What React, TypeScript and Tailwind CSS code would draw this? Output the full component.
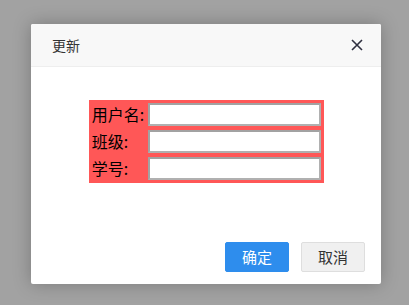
import React from 'react';

const fields = ['用户名:', '班级:', '学号:'];

export default function App() {
    return (
        <div
            className="w-[409px] h-[305px] bg-[#a2a2a2] pt-[24px] pl-[31px] overflow-hidden"
            style={{ fontFamily: '"Noto Sans CJK SC", "Noto Sans", sans-serif' }}
        >
            <div className="w-[350px] h-[260px] bg-white rounded-[2px] shadow-[0_0_18px_rgba(0,0,0,0.25)] flex flex-col">
                {/* Header */}
                <div className="h-[43px] bg-[#f8f8f8] border-b border-[#eeeeee] rounded-t-[2px] flex items-center justify-between pl-[21px] pr-[18px]">
                    <span className="text-[14px] text-[#333]">更新</span>
                    <svg width="12" height="12" viewBox="0 0 12 12" className="text-[#2f3040]">
                        <path d="M1 1 L11 11 M11 1 L1 11" stroke="currentColor" strokeWidth="1.6" />
                    </svg>
                </div>

                {/* Form */}
                <div className="flex justify-center pt-[33px] pl-px">
                    <table className="border-separate border-spacing-[2px] bg-[#ff5757]">
                        <tbody>
                            {fields.map(label => (
                                <tr key={label}>
                                    <td className="p-px w-[51px] text-[16px] leading-[23px] text-black whitespace-nowrap">{label}</td>
                                    <td className="p-px">
                                        <input
                                            type="text"
                                            className="block w-[173px] h-[23px] bg-white border-2 border-[#b0b0b0] border-t-[#a2a2a2] border-l-[#a2a2a2] outline-none"
                                        />
                                    </td>
                                </tr>
                            ))}
                        </tbody>
                    </table>
                </div>

                {/* Footer */}
                <div className="mt-auto flex justify-end gap-[12px] pr-[16px] pb-[12px]">
                    <button className="w-[64px] h-[30px] rounded-[2px] bg-[#2e8ded] border border-[#2e8ded] text-white text-[15px]">确定</button>
                    <button className="w-[64px] h-[30px] rounded-[2px] bg-[#f0f0f0] border border-[#dedede] text-[#333] text-[15px]">取消</button>
                </div>
            </div>
        </div>
    );
}
